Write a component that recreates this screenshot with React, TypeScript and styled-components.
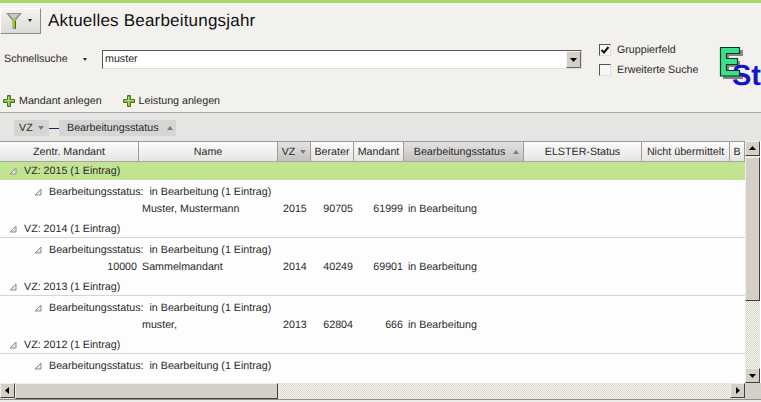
import React from "react";
import styled, { createGlobalStyle } from "styled-components";

const Global = createGlobalStyle`
  html, body { margin: 0; padding: 0; background: #f3f1ee; overflow: hidden; }
  * { box-sizing: border-box; }
  body {
    font-family: "Liberation Sans", Arial, sans-serif; font-size: 10.7px; color: #2a2a2a;
    text-rendering: geometricPrecision;
  }
`;

const Page = styled.div`
  width: 761px; height: 402px; display: flex; flex-direction: column; overflow: hidden;
  background: #f3f1ee; border-top: 3px solid #a5d867;
`;
const TitleBar = styled.div`
  display: flex; align-items: center; height: 31px; padding-top: 4px; gap: 7px;
`;
const FilterButton = styled.div`
  width: 41px; height: 26px; display: flex; align-items: center; gap: 6px; padding-left: 5px;
  background: linear-gradient(#f4f3ef, #dcdad4);
  border: 1px solid #fff; border-right: 1px solid #8a8a86; border-bottom: 1px solid #8a8a86;
`;
const Title = styled.div`
  font-size: 17px; letter-spacing: 0.2px; color: #111; margin-top: 1px;
`;
const SearchBar = styled.div`
  display: flex; height: 49px; position: relative;
`;
const SearchLabel = styled.div`
  width: 65px; margin-left: 4px; margin-top: 18px; line-height: 14px;
`;
const DropArrow = styled.div<{ $m: string }>`
  width: 0; height: 0; border: 2.5px solid transparent; border-top: 3px solid #222; border-bottom: 0;
  margin: ${(p) => p.$m};
`;
const SearchField = styled.div`
  width: 480px; height: 19px; margin-top: 16px; display: flex; background: #fff;
  border: 1px solid; border-color: #555 #ddd #ddd #555;
`;
const SearchText = styled.div`
  flex: 1; padding-left: 2px; line-height: 17px;
`;
const ComboButton = styled.div`
  width: 15px; height: 17px; background: #d4d0c8; display: flex; align-items: center; justify-content: center;
  border: 1px solid; border-color: #f4f3ef #666 #666 #f4f3ef;
`;
const Options = styled.div`
  display: flex; flex-direction: column; gap: 6px; margin-left: 17px; margin-top: 9px;
`;
const Option = styled.div`
  display: flex; align-items: center; gap: 6px; height: 14px;
`;
const CheckBox = styled.div`
  width: 12px; height: 12px; background: #f8f7f4; display: flex; align-items: center; justify-content: center;
  border: 1px solid; border-color: #555 #ddd #ddd #555;
`;
const Logo = styled.svg`
  position: absolute; left: 715px; top: 12px;
`;
const ActionBar = styled.div`
  display: flex; height: 30px; gap: 21px; padding: 11px 0 0 3px; border-bottom: 1px solid #a8a7a4;
`;
const Action = styled.div`
  display: flex; align-items: center; gap: 4px; height: 14px;
`;
const GroupPanel = styled.div`
  height: 28px; background: #e6e5e3; padding: 7px 0 0 14px; display: flex; align-items: flex-start;
`;
const GroupChip = styled.div<{ $w: number; $pad: number }>`
  display: flex; align-items: center; height: 16px; width: ${(p) => p.$w}px; background: #d6d5d3; padding-left: ${(p) => p.$pad}px;
`;
const GroupLink = styled.div`
  width: 10px; height: 1px; background: #24246e; margin-top: 8px;
`;
const SortUp = styled.div`
  width: 0; height: 0; border: 3.5px solid transparent; border-bottom: 4px solid #7c7c7c; border-top: 0;
  margin-left: 8px;
`;
const SortDown = styled.div`
  width: 0; height: 0; border: 3.5px solid transparent; border-top: 4px solid #7c7c7c; border-bottom: 0; margin-left: 5px;
`;
const Body = styled.div`
  height: 242px; display: flex; background: #fdfdfd;
`;
const GridArea = styled.div`
  width: 745px; display: flex; flex-direction: column; overflow: hidden;
`;
const HeaderRow = styled.div`
  display: flex; height: 21px; flex: none; border-top: 1px solid #9a9a98; border-bottom: 1px solid #a8a7a4;
`;
const HeaderCell = styled.div<{ $w: number; $sorted?: boolean; $pad?: number }>`
  width: ${(p) => p.$w}px; flex: none; display: flex; align-items: center; justify-content: center;
  white-space: nowrap; overflow: hidden; padding: 1px 0 0 ${(p) => p.$pad ?? 0}px;
  background: ${(p) => p.$sorted ? "linear-gradient(#e4e3e1, #c3c2c0)" : "linear-gradient(#fbfbfa, #e6e5e3)"};
  border-right: 1px solid #9d9d9b;
`;
const GroupRow = styled.div<{ $active?: boolean }>`
  height: 18px; flex: none; display: flex; align-items: center; padding: 1px 0 0 9px; gap: 7px;
  background: ${(p) => p.$active ? "#c2e391" : "#fdfdfd"};
  border-bottom: 1px solid ${(p) => p.$active ? "#c2e391" : "#d6d5d3"};
`;
const SubRow = styled.div`
  height: 20px; flex: none; display: flex; align-items: center; padding: 4px 0 0 34px; gap: 7px;
`;
const SubValue = styled.span`
  margin-left: 6px;
`;
const DataRow = styled.div`
  height: 20px; flex: none; display: flex; align-items: center; padding-bottom: 2px;
`;
const Cell = styled.div<{ $w: number; $right?: boolean; $pad?: number }>`
  width: ${(p) => p.$w}px; flex: none; white-space: nowrap; overflow: hidden;
  text-align: ${(p) => p.$right ? "right" : "left"};
  padding: 0 ${(p) => p.$right ? 1 : 0}px 0 ${(p) => p.$pad ?? 0}px;
`;
const dither = `
  background-color: #f0eee9;
  background-image: repeating-conic-gradient(#d4d0c8 0 25%, #fbfaf7 0 50%);
  background-size: 2px 2px;
`;
const VScroll = styled.div`
  width: 15px; flex: none; display: flex; flex-direction: column; ${dither}
`;
const HScrollRow = styled.div`
  height: 16px; display: flex; flex: none; background: #d4d0c8;
`;
const HScroll = styled.div`
  width: 745px; display: flex; ${dither}
`;
const ScrollBtn = styled.div`
  width: 15px; height: 15px; flex: none; background: #d4d0c8; display: flex; align-items: center; justify-content: center;
  border: 1px solid; border-color: #f1efe9 #404040 #404040 #f1efe9;
`;
const VThumb = styled.div`
  height: 144px; margin-top: 1px; flex: none; background: #d4d0c8;
  border: 1px solid; border-color: #f1efe9 #404040 #404040 #f1efe9;
`;
const HThumb = styled.div`
  width: 263px; flex: none; background: #d4d0c8;
  border: 1px solid; border-color: #f1efe9 #404040 #404040 #f1efe9;
`;
const Spacer = styled.div`flex: 1;`;
const BottomEdge = styled.div`
  height: 3px; flex: none; background: #ecebe8; border-top: 1px solid #8e8e8c;
`;

const Triangle = () => (
  <svg width="8" height="8" viewBox="0 0 8 8"><path d="M7 1V7H1Z" fill="#e8e8e8" stroke="#8d8d8d" strokeWidth="1" /></svg>
);
const Plus = () => (
  <svg width="12" height="12" viewBox="0 0 12 12">
    <path d="M4.5.5h3v4h4v3h-4v4h-3v-4h-4v-3h4z" fill="#7fb53c" stroke="#4d7a20" strokeWidth="1" />
    <path d="M5.5 2v8M2 5.5h8" stroke="#b5dc7c" strokeWidth="1" />
  </svg>
);
const Arrow = ({ d }: { d: string }) => (
  <svg width="7" height="7" viewBox="0 0 7 7"><path d={d} fill="#000" /></svg>
);

const cols = [139, 139, 33, 43, 50, 120, 118, 88, 15];

const Data = ({ id, name, year, berater, mandant }: { id: string; name: string; year: string; berater: string; mandant: string }) => (
  <DataRow>
    <Cell $w={138} $right>{id}</Cell>
    <Cell $w={140} $pad={4}>{name}</Cell>
    <Cell $w={33} $pad={5}>{year}</Cell>
    <Cell $w={43} $right>{berater}</Cell>
    <Cell $w={50} $right>{mandant}</Cell>
    <Cell $w={120} $pad={4}>in Bearbeitung</Cell>
  </DataRow>
);

const Sub = () => (
  <SubRow><Triangle /><span>Bearbeitungsstatus:<SubValue>in Bearbeitung (1 Eintrag)</SubValue></span></SubRow>
);

export default function App() {
  return (
    <Page>
      <Global />
      <TitleBar>
        <FilterButton>
          <svg width="16" height="18" viewBox="0 0 16 18">
            <path d="M0 1h16L9.5 9V17H6.5V9Z" fill="#8f988e" />
            <path d="M3 2h10L9 6.5H7Z" fill="#c9ccd6" />
            <path d="M6 7h4L9 16H7.5Z" fill="#a8c22a" />
            <path d="M9 9h1v8H9z" fill="#3f6b1c" />
          </svg>
          <DropArrow $m="0" />
        </FilterButton>
        <Title>Aktuelles Bearbeitungsjahr</Title>
      </TitleBar>
      <SearchBar>
        <SearchLabel>Schnellsuche</SearchLabel>
        <DropArrow $m="24px 15px 0 14px" />
        <SearchField>
          <SearchText>muster</SearchText>
          <ComboButton><Arrow d="M0 2h7L3.5 6Z" /></ComboButton>
        </SearchField>
        <Options>
          <Option>
            <CheckBox>
              <svg width="10" height="10" viewBox="0 0 10 10"><path d="M1.5 5l2.5 2.5L8.5 2" fill="none" stroke="#111" strokeWidth="2" /></svg>
            </CheckBox>
            Gruppierfeld
          </Option>
          <Option><CheckBox />Erweiterte Suche</Option>
        </Options>
        <Logo width="46" height="46" viewBox="0 0 46 46">
          <path d="M8 4h20v6H14v5h11v6H14v6h14v6H8Z" fill="#7f8a88" />
          <text x="17" y="39" fontFamily="Liberation Sans" fontWeight="700" fontSize="29" fill="#1414c8">St</text>
          <path d="M5.5 1.5h19v6H11.5v5h11v6h-11v6h13v5.5h-19Z" fill="#3de08a" stroke="#0b3b1e" strokeWidth="1.2" />
        </Logo>
      </SearchBar>
      <ActionBar>
        <Action><Plus />Mandant anlegen</Action>
        <Action><Plus />Leistung anlegen</Action>
      </ActionBar>
      <GroupPanel>
        <GroupChip $w={35} $pad={5}>VZ<SortDown /></GroupChip>
        <GroupLink />
        <GroupChip $w={117} $pad={8}>Bearbeitungsstatus<SortUp /></GroupChip>
      </GroupPanel>
      <Body>
        <GridArea>
          <HeaderRow>
            <HeaderCell $w={cols[0]}>Zentr. Mandant</HeaderCell>
            <HeaderCell $w={cols[1]}>Name</HeaderCell>
            <HeaderCell $w={cols[2]} $sorted>VZ<SortDown /></HeaderCell>
            <HeaderCell $w={cols[3]}>Berater</HeaderCell>
            <HeaderCell $w={cols[4]}>Mandant</HeaderCell>
            <HeaderCell $w={cols[5]} $sorted $pad={6}>Bearbeitungsstatus<SortUp /></HeaderCell>
            <HeaderCell $w={cols[6]}>ELSTER-Status</HeaderCell>
            <HeaderCell $w={cols[7]}>Nicht übermittelt</HeaderCell>
            <HeaderCell $w={cols[8]}>B</HeaderCell>
          </HeaderRow>
          <GroupRow $active><Triangle />VZ: 2015 (1 Eintrag)</GroupRow>
          <Sub />
          <Data id="" name="Muster, Mustermann" year="2015" berater="90705" mandant="61999" />
          <GroupRow><Triangle />VZ: 2014 (1 Eintrag)</GroupRow>
          <Sub />
          <Data id="10000" name="Sammelmandant" year="2014" berater="40249" mandant="69901" />
          <GroupRow><Triangle />VZ: 2013 (1 Eintrag)</GroupRow>
          <Sub />
          <Data id="" name="muster," year="2013" berater="62804" mandant="666" />
          <GroupRow><Triangle />VZ: 2012 (1 Eintrag)</GroupRow>
          <Sub />
        </GridArea>
        <VScroll>
          <ScrollBtn><Arrow d="M0 5h7L3.5 1Z" /></ScrollBtn>
          <VThumb />
          <Spacer />
          <ScrollBtn><Arrow d="M0 2h7L3.5 6Z" /></ScrollBtn>
        </VScroll>
      </Body>
      <HScrollRow>
        <HScroll>
          <ScrollBtn><Arrow d="M5 0v7L1 3.5Z" /></ScrollBtn>
          <HThumb />
          <Spacer />
          <ScrollBtn><Arrow d="M2 0v7l4-3.5Z" /></ScrollBtn>
        </HScroll>
      </HScrollRow>
      <BottomEdge />
    </Page>
  );
}
